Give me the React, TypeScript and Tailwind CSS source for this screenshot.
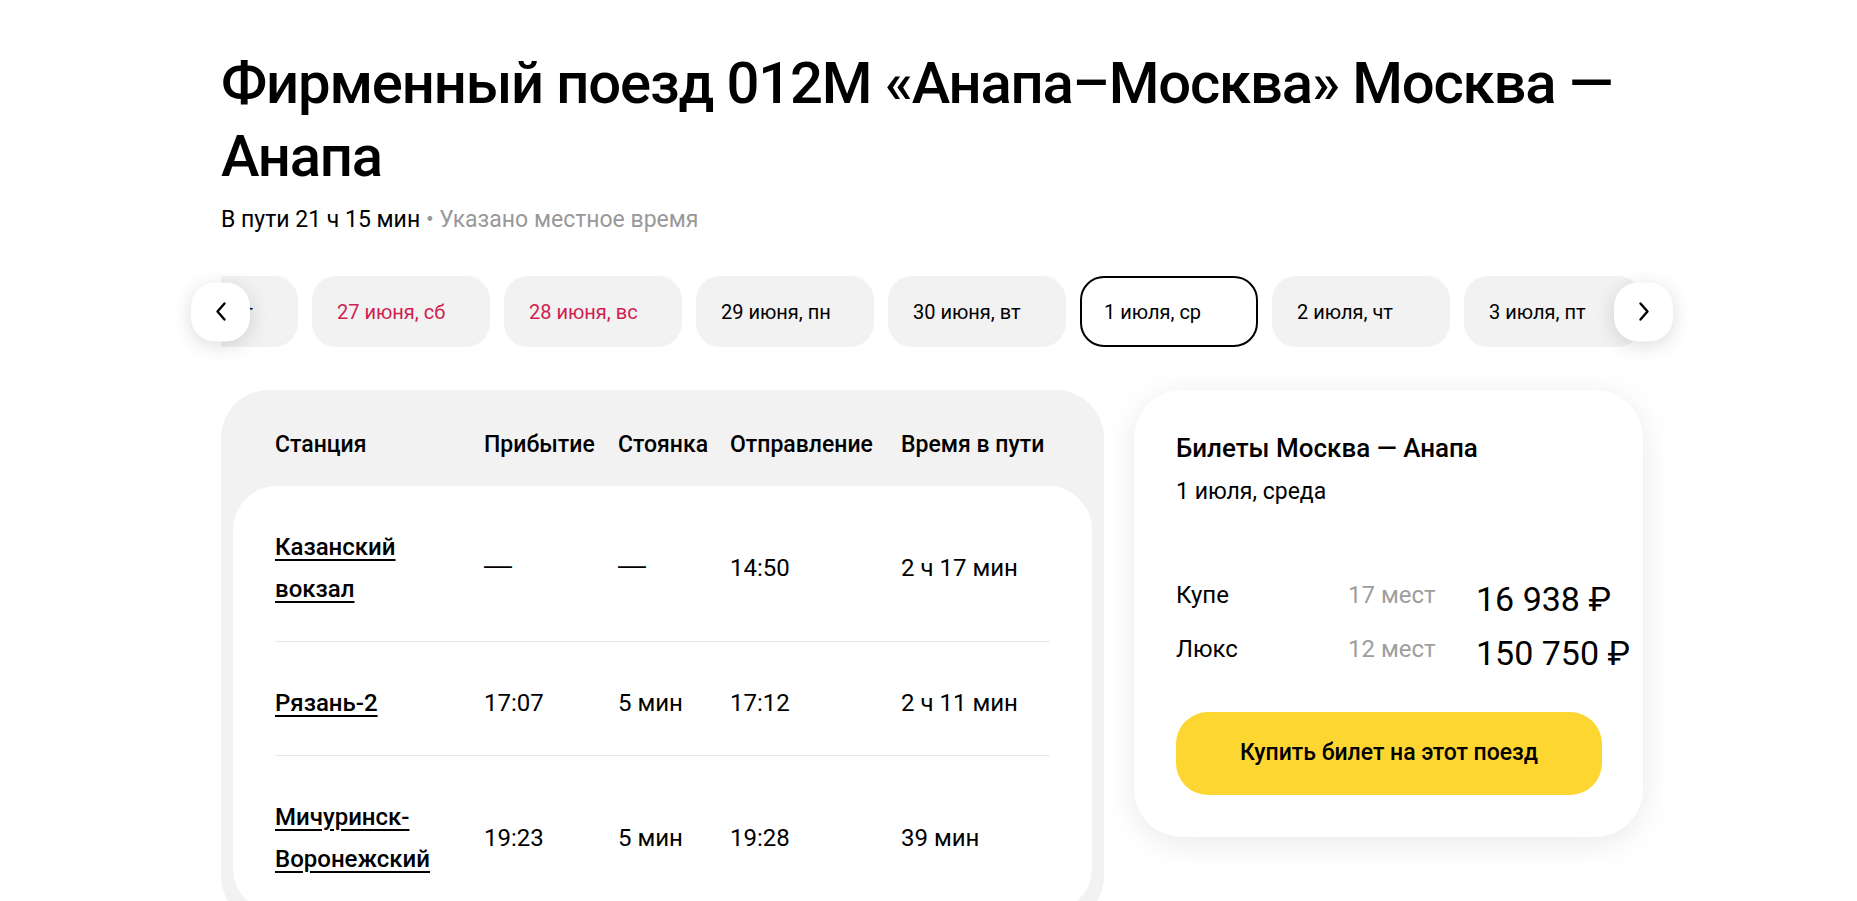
import { useState } from "react";

const tabs = [
  { label: "26 июня, пт", weekend: false },
  { label: "27 июня, сб", weekend: true },
  { label: "28 июня, вс", weekend: true },
  { label: "29 июня, пн", weekend: false },
  { label: "30 июня, вт", weekend: false },
  { label: "1 июля, ср", weekend: false },
  { label: "2 июля, чт", weekend: false },
  { label: "3 июля, пт", weekend: false },
  { label: "4 июля, сб", weekend: true },
  { label: "5 июля, вс", weekend: true },
];

const stops = [
  { station: "Казанский вокзал", arrival: "—", stop: "—", departure: "14:50", time: "2 ч 17 мин" },
  { station: "Рязань-2", arrival: "17:07", stop: "5 мин", departure: "17:12", time: "2 ч 11 мин" },
  { station: "Мичуринск-Воронежский", arrival: "19:23", stop: "5 мин", departure: "19:28", time: "39 мин" },
];

const prices = [
  { type: "Купе", seats: "17 мест", price: "16\u00a0938\u00a0₽" },
  { type: "Люкс", seats: "12 мест", price: "150\u00a0750\u00a0₽" },
];

const Chevron = ({ dir }: { dir: "left" | "right" }) => (
  <svg width="12" height="20" viewBox="0 0 12 20" fill="none">
    <path
      d={dir === "left" ? "M9.5 2 L2.5 10 L9.5 18" : "M2.5 2 L9.5 10 L2.5 18"}
      stroke="#000"
      strokeWidth="2.4"
      strokeLinecap="round"
      strokeLinejoin="round"
    />
  </svg>
);

// long dash in the table is wider than Roboto's
const Cell = ({ value }: { value: string }) =>
  value === "—" ? (
    <span className="inline-block -translate-y-[3px] font-['Liberation_Sans',sans-serif] text-[28px]">—</span>
  ) : (
    <span>{value}</span>
  );

const App = () => {
  const [active, setActive] = useState(5);

  return (
    <div className="min-h-screen bg-white text-black font-[Roboto,sans-serif]">
      <div className="ml-[221px] w-[1423px] pt-[47px] pb-[40px]">
        <h1 className="text-[58px] leading-[73px] font-medium tracking-[-0.02em]">
          Фирменный поезд 012М «Анапа–Москва» Москва — Анапа
        </h1>
        <p className="mt-[12px] text-[23px] leading-[30px]">
          В пути 21 ч 15 мин <span className="text-[#999]">• Указано местное время</span>
        </p>

        <div className="relative mt-[41px]">
          <div className="overflow-hidden">
            <div className="flex gap-[14px] -ml-[101px]">
              {tabs.map((t, i) => (
                <button
                  key={t.label}
                  onClick={() => setActive(i)}
                  className={
                    i === active
                      ? "shrink-0 w-[178px] h-[71px] rounded-[24px] flex items-center pl-[22px] text-[20px] bg-white border-[2.5px] border-black"
                      : "shrink-0 w-[178px] h-[71px] rounded-[24px] flex items-center pl-[25px] text-[20px] bg-[#f2f2f2]"
                  }
                >
                  <span className={t.weekend ? "text-[#cf1f50]" : "text-black"}>{t.label}</span>
                </button>
              ))}
            </div>
          </div>
          <button className="absolute left-[-30px] top-1/2 -translate-y-1/2 w-[59px] h-[59px] rounded-[24px] bg-white shadow-[0_4px_20px_rgba(0,0,0,0.14)] flex items-center justify-center">
            <Chevron dir="left" />
          </button>
          <button className="absolute right-[-29px] top-1/2 -translate-y-1/2 w-[59px] h-[59px] rounded-[24px] bg-white shadow-[0_4px_20px_rgba(0,0,0,0.14)] flex items-center justify-center">
            <Chevron dir="right" />
          </button>
        </div>

        <div className="mt-[43px] grid grid-cols-[883px_509px] gap-[30px] items-start">
          <div className="bg-[#f2f2f2] rounded-[48px] px-[12px] pb-[12px]">
            <div className="grid grid-cols-[209px_134px_112px_171px_1fr] px-[42px] pt-[40px] pb-[26px] text-[23px] leading-[30px] font-medium whitespace-nowrap">
              <span>Станция</span>
              <span>Прибытие</span>
              <span>Стоянка</span>
              <span>Отправление</span>
              <span>Время в пути</span>
            </div>
            <div className="bg-white rounded-[44px] px-[42px]">
              {stops.map((s) => (
                <div
                  key={s.station}
                  className="grid grid-cols-[209px_134px_112px_171px_1fr] items-center pt-[40px] pb-[31px] border-b border-[#e8e8e8] text-[24px] leading-[42px]"
                >
                  <span className="pr-[36px]">
                    <a href="#" className="font-medium underline underline-offset-[4px] decoration-[1.5px]">
                      {s.station}
                    </a>
                  </span>
                  <Cell value={s.arrival} />
                  <Cell value={s.stop} />
                  <span>{s.departure}</span>
                  <span>{s.time}</span>
                </div>
              ))}
            </div>
          </div>

          <div className="bg-white rounded-[48px] shadow-[0_6px_32px_rgba(0,0,0,0.09)] px-[42px] pt-[42px] pb-[42px]">
            <div className="text-[26px] leading-[32px] font-medium">Билеты Москва — Анапа</div>
            <div className="mt-[12px] text-[23px] leading-[32px]">1 июля, среда</div>
            <div className="mt-[71px] flex flex-col gap-[14px]">
              {prices.map((p) => (
                <div key={p.type} className="grid grid-cols-[172px_128px_1fr] items-start">
                  <span className="text-[24px] leading-[32px]">{p.type}</span>
                  <span className="text-[24px] leading-[32px] text-[#9e9e9e]">{p.seats}</span>
                  <span className="text-[34px] leading-[40px]">{p.price}</span>
                </div>
              ))}
            </div>
            <button className="mt-[39px] w-[426px] h-[83px] rounded-[32px] bg-[#fed631] text-[23px] font-medium">
              Купить билет на этот поезд
            </button>
          </div>
        </div>
      </div>
    </div>
  );
};

export default App;
